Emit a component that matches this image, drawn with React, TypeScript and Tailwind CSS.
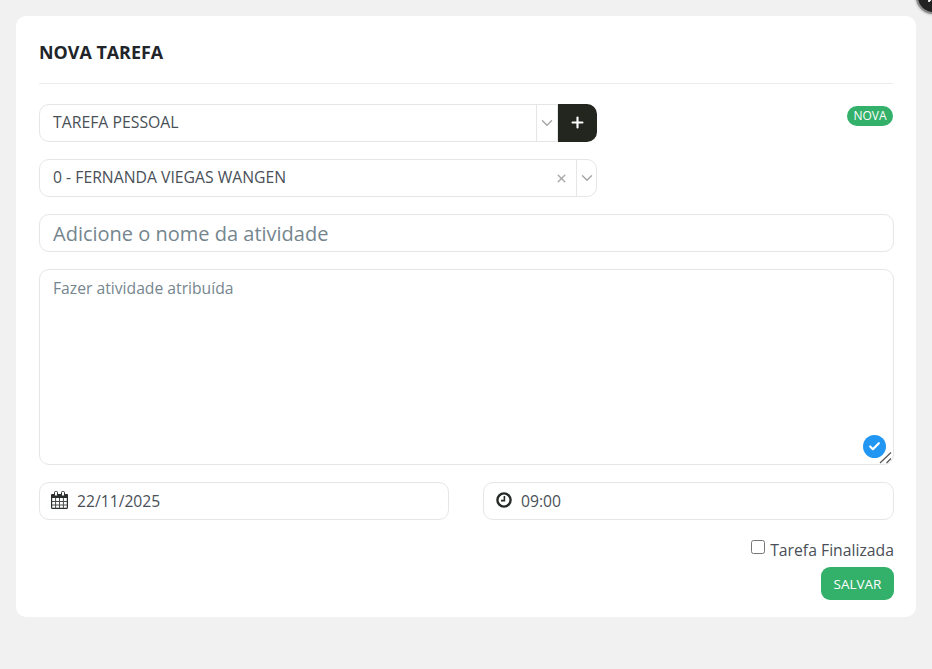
import React from 'react';
import { Check, ChevronDown, Plus, X } from 'lucide-react';

const Chevron: React.FC = () => (
  <div className="flex h-full w-[21px] items-center justify-center border-l border-[#e4e6e8]">
    <ChevronDown className="h-[18px] w-[18px] text-[#a8a8a8]" strokeWidth={2} />
  </div>
);

const CalendarIcon: React.FC = () => (
  <svg viewBox="0 0 17 18" className="h-[18px] w-[17px]" fill="none">
    <path d="M1 3H16C16.5 3 17 3.5 17 4V7H0V4C0 3.5.5 3 1 3Z" fill="#2b2f2c" />
    <rect x="3.5" y="0.5" width="3" height="4.5" rx="1" fill="#fff" stroke="#2b2f2c" />
    <rect x="10.5" y="0.5" width="3" height="4.5" rx="1" fill="#fff" stroke="#2b2f2c" />
    <path d="M.6 7V16.4C.6 17 1 17.4 1.6 17.4H15.4C16 17.4 16.4 17 16.4 16.4V7" stroke="#2b2f2c" strokeWidth="1.2" />
    <path d="M1 10.5H16M1 14H16M4.6 7V17M8.5 7V17M12.4 7V17" stroke="#4a4d4b" strokeWidth="1" />
  </svg>
);

const ClockIcon: React.FC = () => (
  <svg viewBox="0 0 16 16" className="h-[16px] w-[16px]" fill="none" stroke="#262a27">
    <circle cx="8" cy="8" r="6.6" strokeWidth="2.4" />
    <path d="M8.4 4V8.6H5" strokeWidth="1.6" />
  </svg>
);

const App: React.FC = () => {
  return (
    <div className="relative h-[669px] w-[932px] overflow-hidden bg-[#f1f1f1] pt-4 pl-4 font-['Open_Sans',sans-serif]">
      {/* close button, cut by the window corner */}
      <div className="absolute -top-[20px] -right-[18px] flex h-[34px] w-[34px] items-center justify-center rounded-full border-2 border-[#8a8a8a] bg-[#222] shadow-[0_0_3px_rgba(0,0,0,0.4)]">
        <X className="h-4 w-4 text-white" strokeWidth={3} />
      </div>

      <div className="flex h-[601px] w-[900px] flex-col rounded-[10px] bg-white px-[23px] pt-[24px]">
        <h1 className="text-[17.9px] leading-[24px] font-bold text-[#212529]">NOVA TAREFA</h1>
        <hr className="mt-[19px] w-[854px] border-[#ececec]" />

        <div className="relative mt-5 flex h-[38px]">
          <div className="flex w-[519px] items-center justify-between rounded-l-[10px] border border-[#e4e6e8]">
            <span className="pb-[2px] pl-[13px] text-[15.8px] leading-[34px] text-[#495057]">TAREFA PESSOAL</span>
            <Chevron />
          </div>
          <button className="flex w-[39px] items-center justify-center rounded-r-[10px] bg-[#22261f] pb-[2px] text-white">
            <Plus className="h-[17px] w-[17px]" strokeWidth={3} />
          </button>
          <span className="absolute top-[2px] right-0 w-[46px] rounded-full bg-[#33b16b] text-center text-[12px] leading-[20px] text-white">
            NOVA
          </span>
        </div>

        <div className="mt-[17px] flex h-[38px] w-[558px] items-center justify-between rounded-[10px] border border-[#e4e6e8]">
          <span className="pb-[2px] pl-[13px] text-[15.75px] leading-[34px] text-[#495057]">0 - FERNANDA VIEGAS WANGEN</span>
          <div className="flex h-full items-center">
            <X className="mr-[8px] h-[13px] w-[13px] text-[#a8a8a8]" strokeWidth={2.5} />
            <div className="flex h-full w-[20px] items-center justify-center border-l border-[#e4e6e8]">
              <ChevronDown className="h-[18px] w-[18px] text-[#a8a8a8]" strokeWidth={2} />
            </div>
          </div>
        </div>

        <input
          className="mt-[17px] h-[38px] w-[855px] rounded-[10px] border border-[#e4e6e8] px-[13px] text-[20px] text-[#495057] outline-none placeholder:text-[#75868e]"
          placeholder="Adicione o nome da atividade"
        />

        <div className="relative mt-[17px] h-[196px] w-[855px]">
          <textarea
            className="block h-full w-full resize-none rounded-[10px] border border-[#e4e6e8] px-[13px] pt-[8px] text-[15.7px] leading-[21px] text-[#495057] outline-none placeholder:text-[#75868e]"
            placeholder="Fazer atividade atribuída"
          />
          <div className="absolute right-[8px] bottom-[7px] flex h-[23px] w-[23px] items-center justify-center rounded-full bg-[#2196f3]">
            <Check className="h-[13px] w-[13px] text-white" strokeWidth={4} />
          </div>
          {/* resize grip */}
          <svg viewBox="0 0 14 13" className="absolute right-[1px] bottom-[1px] h-[13px] w-[14px]" fill="none" stroke="#555" strokeWidth="1.2">
            <path d="M1 12L12 1.5M7.5 12L12 7.5" />
          </svg>
        </div>

        <div className="mt-[17px] flex w-[855px] justify-between">
          <div className="flex h-[38px] w-[410px] items-center gap-[9px] rounded-[10px] border border-[#e4e6e8] pl-[11px]">
            <div className="pb-[2px]">
              <CalendarIcon />
            </div>
            <span className="pt-[1px] text-[15.7px] text-[#495057]">22/11/2025</span>
          </div>
          <div className="flex h-[38px] w-[411px] items-center gap-[9px] rounded-[10px] border border-[#e4e6e8] pl-[12px]">
            <div className="pb-[2px]">
              <ClockIcon />
            </div>
            <span className="pt-[1px] text-[15.7px] text-[#495057]">09:00</span>
          </div>
        </div>

        <div className="mt-[18px] flex h-[22px] w-[855px] items-center justify-end">
          <input type="checkbox" className="relative -top-[2px] mr-[5px] h-[14px] w-[14px]" />
          <span className="pt-[2px] text-[15.75px] leading-[20px] text-[#495057]">Tarefa Finalizada</span>
        </div>

        <div className="mt-[7px] flex w-[855px] justify-end">
          <button className="h-[33px] w-[73px] rounded-[9px] bg-[#33b16b] pt-[1px] text-[13.5px] text-white">
            SALVAR
          </button>
        </div>
      </div>
    </div>
  );
};

export default App;
